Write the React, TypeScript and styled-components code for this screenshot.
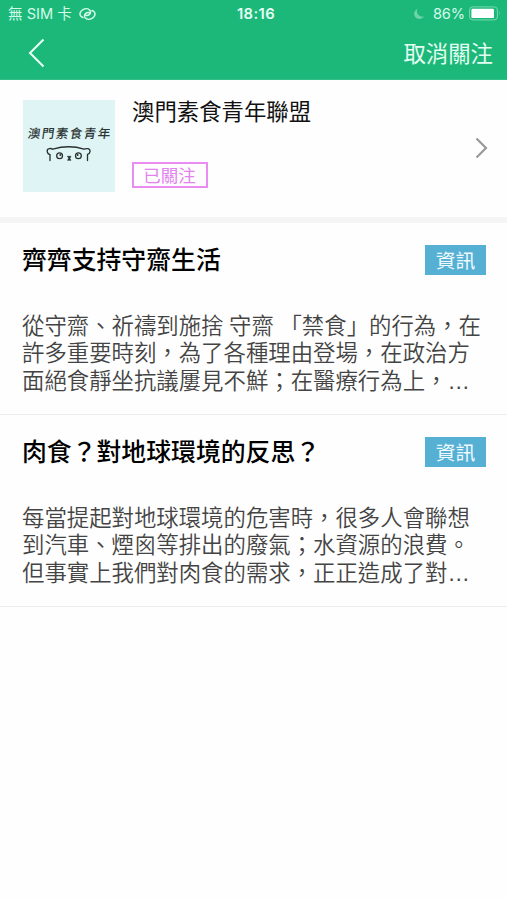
import React from "react";
import styled, { createGlobalStyle } from "styled-components";

const GlobalStyle = createGlobalStyle`
  * { box-sizing: border-box; }
  body {
    margin: 0;
    background: #fefefe;
    color: #111;
    font-family: "Noto Sans CJK TC", sans-serif;
    text-spacing-trim: space-all;
  }
`;

const Screen = styled.main`
  display: flex;
  flex-direction: column;
  min-height: 900px;
  background: #fefefe;
`;

const Header = styled.header`
  height: 80px;
  background: #1cb87a;
  border-bottom: 1px solid #31bd88;
  color: #e9fff6;
`;

const StatusBar = styled.div`
  display: grid;
  grid-template-columns: 1fr auto 1fr;
  align-items: center;
  height: 27px;
  padding: 0 6px 0 8px;
  font-family: Inter, "Noto Sans CJK TC", sans-serif;
  font-size: 14.6px;
  line-height: 27px;
  color: #d3fbe9;
`;

const StatusGroup = styled.div<{ $end?: boolean }>`
  display: flex;
  align-items: center;
  justify-content: ${(p) => (p.$end ? "flex-end" : "flex-start")};
`;

const Carrier = styled.span`
  margin-right: 7px;
  padding-top: 2px;
  line-height: 25px;
  white-space: nowrap;
`;

const Clock = styled.time`
  padding: 2px 0 0 3px;
  font-size: 14.8px;
  font-weight: 600;
  line-height: 25px;
  letter-spacing: 0.4px;
  color: #e6fff5;
`;

const Percent = styled.span`
  margin: 0 4px 0 8px;
  padding-top: 2px;
  line-height: 25px;
  letter-spacing: -0.1px;
`;

const NavBar = styled.nav`
  display: flex;
  align-items: center;
  justify-content: space-between;
  height: 52px;
  padding: 0 14px 0 27px;
`;

const IconButton = styled.button`
  display: flex;
  padding: 0;
  border: 0;
  background: none;
  color: inherit;
`;

const UnfollowButton = styled.button`
  padding: 0 0 2px;
  border: 0;
  background: none;
  color: #e2fdf1;
  font: 400 22.4px/30px "Noto Sans CJK TC", sans-serif;
`;

const Profile = styled.section`
  display: flex;
  align-items: flex-start;
  height: 143px;
  padding: 20px 18px 0 23px;
  border-bottom: 6px solid #f5f5f5;
`;

const Avatar = styled.div`
  display: flex;
  flex-direction: column;
  align-items: center;
  width: 92px;
  height: 92px;
  padding-top: 23px;
  background: #dff4f4;
`;

const AvatarText = styled.span`
  margin: 0 -1.5px 1px 0;
  font-size: 12.5px;
  font-weight: 500;
  line-height: 20px;
  letter-spacing: 1.5px;
  white-space: nowrap;
  transform: skewX(-8deg);
  color: #2c3434;
`;

const ProfileText = styled.div`
  flex: 1;
  display: flex;
  flex-direction: column;
  align-items: flex-start;
  padding-left: 17px;
`;

const ProfileName = styled.h1`
  margin: -6px 0 0;
  font-size: 22.4px;
  font-weight: 400;
  line-height: 32px;
`;

const FollowedTag = styled.span`
  width: 76px;
  height: 26px;
  margin-top: 36px;
  border: 2px solid #ea8df3;
  font-size: 17.5px;
  line-height: 21px;
  text-align: center;
  text-indent: -1px;
  color: #e283ee;
`;

const Disclosure = styled.div`
  display: flex;
  align-items: center;
  height: 96px;
  color: #999;
`;

const Article = styled.article`
  height: 192px;
  padding: 22px 21px 0 22px;
  border-bottom: 1px solid #ededed;
`;

const ArticleHead = styled.div`
  display: flex;
  align-items: center;
  justify-content: space-between;
  height: 30px;
`;

const ArticleTitle = styled.h2`
  margin: -4px 0 0;
  font-size: 24.85px;
  font-weight: 500;
  line-height: 36px;
  color: #000;
`;

const Category = styled.span`
  width: 61px;
  height: 30px;
  background: #56b0d4;
  color: #eefaff;
  font-size: 19.8px;
  line-height: 29px;
  text-align: center;
`;

const Summary = styled.p`
  margin: 36px 0 0;
  font-size: 22.4px;
  font-weight: 350;
  line-height: 27.3px;
  word-spacing: 0.6px;
  color: #444;
`;

const SummaryLine = styled.span`
  display: block;
  white-space: nowrap;
`;

const Ellipsis = styled.span`
  font-family: "Liberation Sans", sans-serif;
  line-height: 1;
`;

const articles = [
  {
    title: "齊齊支持守齋生活",
    lines: [
      "從守齋、祈禱到施捨 守齋 「禁食」的行為，在",
      "許多重要時刻，為了各種理由登場，在政治方",
      "面絕食靜坐抗議屢見不鮮；在醫療行為上，",
    ],
  },
  {
    title: "肉食？對地球環境的反思？",
    lines: [
      "每當提起對地球環境的危害時，很多人會聯想",
      "到汽車、煙囪等排出的廢氣；水資源的浪費。",
      "但事實上我們對肉食的需求，正正造成了對",
    ],
  },
];

const LinkIcon = () => (
  <svg width="17" height="14" viewBox="0 0 17 14" fill="none" stroke="currentColor" strokeWidth="1.5" strokeLinecap="round">
    <path d="M10.900 6.300C10.200 5 8 5.300 6.800 6.300C5.300 7.600 5 9.500 6.200 10.800C7.700 12.500 10.800 12.600 13 11.400C15.700 10 16.700 7.200 15.400 5.200C14.800 4.300 14 3.800 13 3.600" />
    <path d="M6.100 7.700C6.800 9 9 8.700 10.200 7.700C11.700 6.400 12 4.500 10.800 3.200C9.300 1.500 6.200 1.400 4 2.600C1.300 4 .3 6.800 1.600 8.800C2.200 9.700 3 10.200 4 10.400" />
  </svg>
);

const MoonIcon = () => (
  <svg width="12" height="12" viewBox="0 0 12 12">
    <path d="M4.200 1C.8 2.700.3 6.600 2.500 9.200C4.700 11.700 9 11.500 11 8.500C6.500 9.500 2.900 5.800 4.200 1Z" fill="#6fd3a9" />
  </svg>
);

const BatteryIcon = () => (
  <svg width="32" height="15" viewBox="0 0 32 15">
    <rect x=".6" y=".9" width="27.800" height="13" rx="3" fill="none" stroke="#78d8b0" strokeWidth="1" />
    <rect x="2.400" y="2.700" width="22.600" height="9.400" rx="1.200" fill="#fff" />
    <path d="M30 5.200Q31.400 7.400 30 9.600Z" fill="#78d8b0" />
  </svg>
);

const BackIcon = () => (
  <svg width="19" height="30" viewBox="0 0 19 30" fill="none" stroke="currentColor" strokeWidth="2">
    <path d="M16.500 1.500L3 15L16.500 28.500" />
  </svg>
);

const ForwardIcon = () => (
  <svg width="15" height="22" viewBox="0 0 15 22" fill="none" stroke="currentColor" strokeWidth="2.200">
    <path d="M2.500 1.500L12 11L2.500 20.500" />
  </svg>
);

const BearIcon = () => (
  <svg width="48" height="18" viewBox="0 0 48 18" fill="none" stroke="#29302f" strokeWidth="1.300" strokeLinecap="round">
    <path d="M5 16.500V10.500C1.500 9.500 1.300 5 4.300 4.600Q6.500 4.200 7.800 5.200Q24 .3 39 5.200Q41 4.200 43.200 4.700C46 5.600 45.500 9.600 42.500 10.400V16.500" />
    <circle cx="14.600" cy="11.800" r="2.900" />
    <circle cx="33.400" cy="11.800" r="2.900" />
    <circle cx="15.300" cy="10.900" r="1" fill="#29302f" stroke="none" />
    <circle cx="32.700" cy="10.900" r="1" fill="#29302f" stroke="none" />
    <path d="M22.500 12.300H26L24.800 14.400L26 16.300H22.500L23.700 14.400Z" fill="#29302f" strokeWidth=".6" />
  </svg>
);

export default function App() {
  return (
    <>
      <GlobalStyle />
      <Screen lang="zh-Hant">
        <Header>
          <StatusBar>
            <StatusGroup>
              <Carrier>無 SIM 卡</Carrier>
              <LinkIcon />
            </StatusGroup>
            <Clock>18:16</Clock>
            <StatusGroup $end>
              <MoonIcon />
              <Percent>86%</Percent>
              <BatteryIcon />
            </StatusGroup>
          </StatusBar>
          <NavBar>
            <IconButton aria-label="返回">
              <BackIcon />
            </IconButton>
            <UnfollowButton>取消關注</UnfollowButton>
          </NavBar>
        </Header>
        <Profile>
          <Avatar>
            <AvatarText>澳門素食青年</AvatarText>
            <BearIcon />
          </Avatar>
          <ProfileText>
            <ProfileName>澳門素食青年聯盟</ProfileName>
            <FollowedTag>已關注</FollowedTag>
          </ProfileText>
          <Disclosure>
            <ForwardIcon />
          </Disclosure>
        </Profile>
        {articles.map((article) => (
          <Article key={article.title}>
            <ArticleHead>
              <ArticleTitle>{article.title}</ArticleTitle>
              <Category>資訊</Category>
            </ArticleHead>
            <Summary>
              {article.lines.map((line, i) => (
                <SummaryLine key={line}>
                  {line}
                  {i === article.lines.length - 1 && <Ellipsis>…</Ellipsis>}
                </SummaryLine>
              ))}
            </Summary>
          </Article>
        ))}
      </Screen>
    </>
  );
}
